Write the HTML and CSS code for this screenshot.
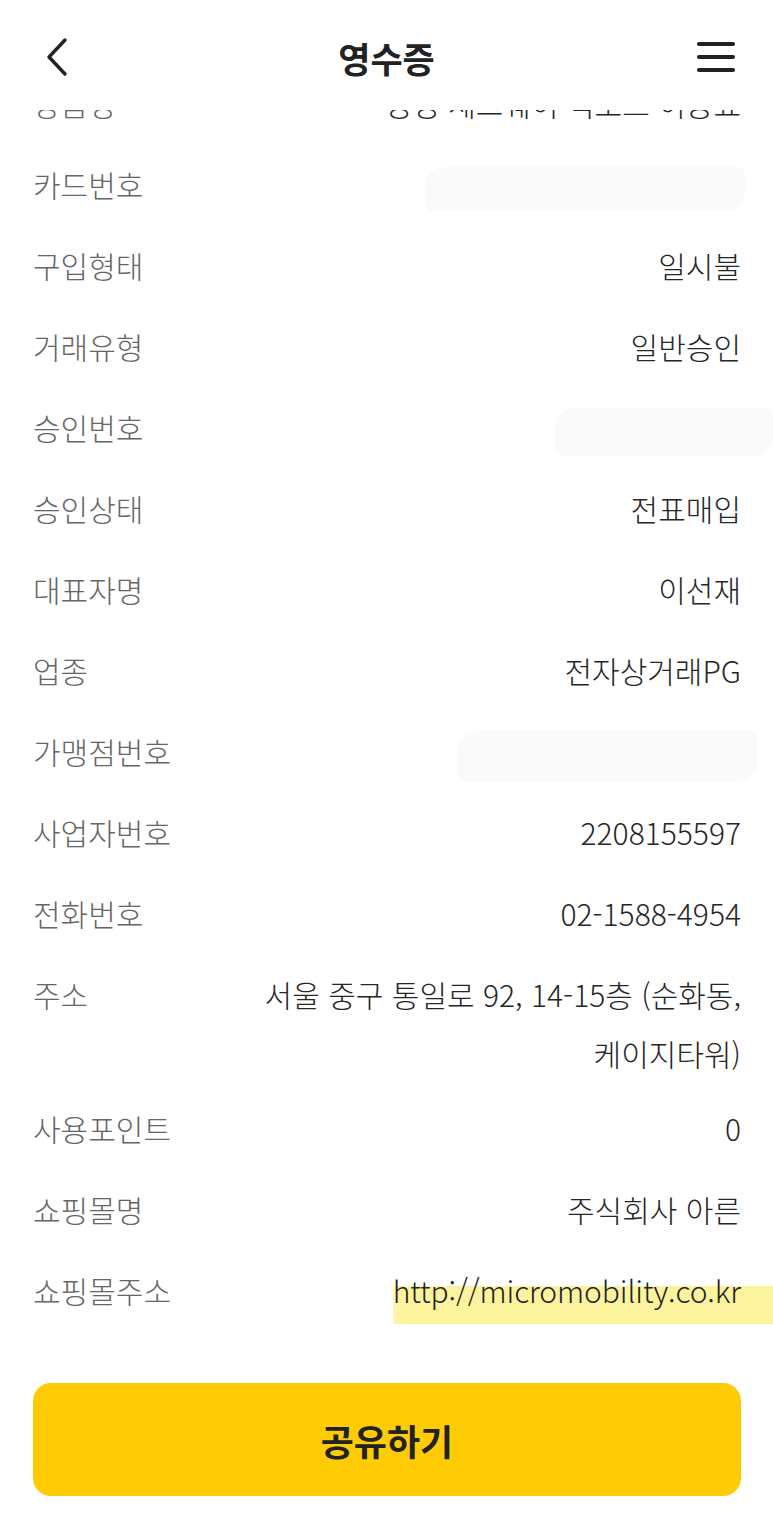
FILE: index.html
```html
<!DOCTYPE html>
<html lang="ko">
<head>
<meta charset="utf-8">
<title>영수증</title>
<link rel="stylesheet" href="styles.css">
</head>
<body>
<div class="page">
  <header class="header">
    <button class="icon-btn back" aria-label="뒤로">
      <svg width="26" height="40" viewBox="0 0 26 40"><path d="M21 3 L5 20 L21 37" fill="none" stroke="#222" stroke-width="3.4" stroke-linecap="round" stroke-linejoin="round"/></svg>
    </button>
    <h1 class="title">영수증</h1>
    <button class="icon-btn menu" aria-label="메뉴">
      <svg width="40" height="34" viewBox="0 0 40 34"><g stroke="#222" stroke-width="4.2" stroke-linecap="round"><line x1="3" y1="4" x2="37" y2="4"/><line x1="3" y1="17" x2="37" y2="17"/><line x1="3" y1="30" x2="37" y2="30"/></g></svg>
    </button>
  </header>

  <div class="content">
    <div class="rows">
      <div class="row row-cut"><span class="label">상품명</span><span class="value">씽씽 세그웨이 킥보드 이용료</span></div>
      <div class="row"><span class="label">카드번호</span><span class="value"><span class="blur blur-card"></span></span></div>
      <div class="row"><span class="label">구입형태</span><span class="value">일시불</span></div>
      <div class="row"><span class="label">거래유형</span><span class="value">일반승인</span></div>
      <div class="row"><span class="label">승인번호</span><span class="value"><span class="blur blur-approve"></span></span></div>
      <div class="row"><span class="label">승인상태</span><span class="value">전표매입</span></div>
      <div class="row"><span class="label">대표자명</span><span class="value">이선재</span></div>
      <div class="row"><span class="label">업종</span><span class="value">전자상거래PG</span></div>
      <div class="row"><span class="label">가맹점번호</span><span class="value"><span class="blur blur-store"></span></span></div>
      <div class="row"><span class="label">사업자번호</span><span class="value">2208155597</span></div>
      <div class="row"><span class="label">전화번호</span><span class="value">02-1588-4954</span></div>
      <div class="row row-multi"><span class="label">주소</span><span class="value">서울 중구 통일로 92, 14-15층 (순화동,<br>케이지타워)</span></div>
      <div class="row"><span class="label">사용포인트</span><span class="value">0</span></div>
      <div class="row"><span class="label">쇼핑몰명</span><span class="value">주식회사 아른</span></div>
      <div class="row"><span class="label">쇼핑몰주소</span><span class="value"><span class="hl">http://micromobility.co.kr</span></span></div>
    </div>
  </div>

  <div class="actions">
    <button class="share">공유하기</button>
  </div>
</div>
</body>
</html>
```

FILE: styles.css
```css
* { box-sizing: border-box; }
html, body { margin: 0; padding: 0; background: #fff; }
body {
  font-family: "Noto Sans CJK KR", "Noto Sans", sans-serif;
  color: #222;
}
.page {
  width: 773px;
  height: 1527px;
  display: flex;
  flex-direction: column;
  overflow: hidden;
}
.header {
  height: 110px;
  flex: none;
  display: grid;
  grid-template-columns: 1fr auto 1fr;
  align-items: center;
  padding: 4px 37px 0 37px;
  background: #fff;
  position: relative;
  z-index: 2;
}
.icon-btn {
  border: 0;
  background: none;
  padding: 0;
  display: flex;
  align-items: center;
}
.icon-btn.back { justify-self: start; margin-left: 7px; }
.icon-btn.menu { justify-self: end; }
.title {
  margin: 0;
  font-size: 35px;
  font-weight: 700;
  color: #222;
  line-height: 1;
}
.content {
  overflow: hidden;
  flex: none;
}
.rows {
  display: flex;
  flex-direction: column;
  padding: 0 32px 0 33px;
}
.row {
  display: flex;
  align-items: flex-start;
  justify-content: space-between;
  padding: 11px 0;
  font-size: 30px;
  font-weight: 300;
  line-height: 59px;
}
.row-cut { margin-top: -47px; }
.row-multi { margin-bottom: -6px; }
.label {
  color: #666;
  white-space: nowrap;
  flex: none;
}
.value {
  color: #262626;
  text-align: right;
  flex: 1;
  margin-left: 20px;
}
.blur {
  display: inline-block;
  vertical-align: middle;
  background: #fafafa;
  border-radius: 20px 6px 18px 8px;
}
.blur-card { width: 320px; height: 44px; margin-right: -4px; }
.blur-approve { width: 218px; height: 48px; margin-right: -32px; }
.blur-store { width: 300px; height: 50px; margin-right: -16px; }
.hl {
  position: relative;
  z-index: 0;
  display: inline-block;
  letter-spacing: -0.1px;
  color: #222;
}
.hl::before {
  content: "";
  position: absolute;
  left: 0;
  right: -32px;
  top: 25px;
  height: 38px;
  background: linear-gradient(90deg, #fdf7bd 0, #fbf39e 6px, #fbf39e 100%);
  z-index: -1;
}
.actions {
  padding: 52px 32px 0 33px;
  flex: none;
}
.share {
  width: 100%;
  height: 113px;
  border: 0;
  border-radius: 18px;
  background: #ffcb05;
  font-family: "Noto Sans CJK KR", "Noto Sans", sans-serif;
  font-size: 36px;
  font-weight: 700;
  color: #222;
  padding: 0;
}
```
